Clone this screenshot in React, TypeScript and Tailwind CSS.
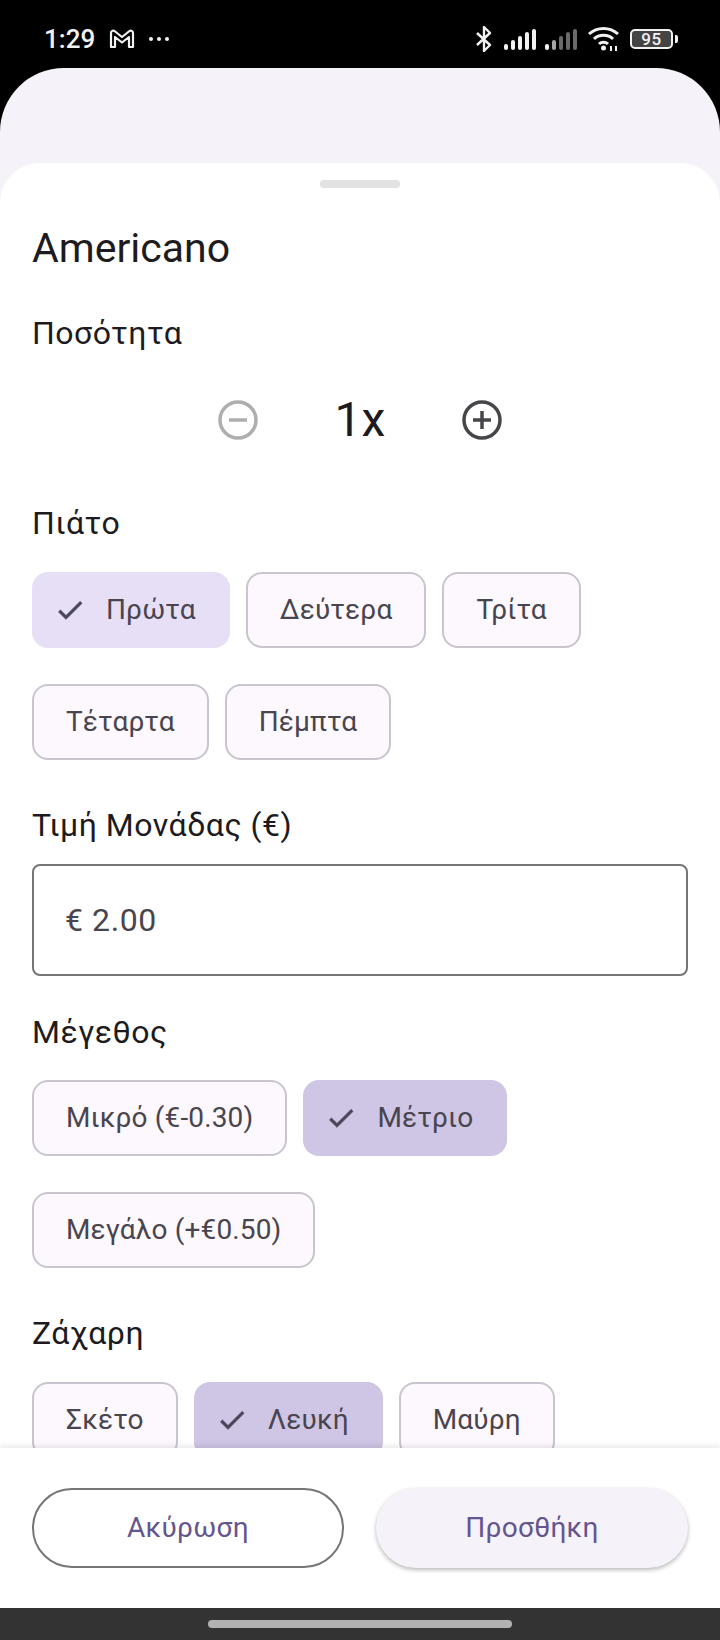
const ROW_ONE = [
  { label: "Πρώτα", selected: "light" },
  { label: "Δεύτερα" },
  { label: "Τρίτα" },
  { label: "Τέταρτα" },
  { label: "Πέμπτα" },
];

const ROW_SIZE = [
  { label: "Μικρό (€-0.30)" },
  { label: "Μέτριο", selected: "dark" },
  { label: "Μεγάλο (+€0.50)" },
];

const ROW_SUGAR = [
  { label: "Σκέτο" },
  { label: "Λευκή", selected: "dark" },
  { label: "Μαύρη" },
];

type ChipProps = {
  label: string;
  selected?: string;
};

function Chip({ label, selected }: ChipProps) {
  if (selected) {
    return (
      <div
        className={`flex h-[76px] shrink-0 items-center rounded-[16px] pl-[22px] pr-[34px] text-[28px] tracking-[0.15px] text-[#49454f] ${
          selected === "light" ? "bg-[#e6dff6]" : "bg-[#cfc5e4]"
        }`}
      >
        <svg width="32" height="32" viewBox="0 0 24 24" fill="#4a4458" stroke="#4a4458" strokeWidth="0.6" className="mr-[20px]">
          <path d="M9 16.17L4.83 12l-1.42 1.41L9 19 21 7l-1.41-1.41z" />
        </svg>
        {label}
      </div>
    );
  }

  return (
    <div className="flex h-[76px] shrink-0 items-center rounded-[16px] border-2 border-[#cac4d0] bg-[#fdf8fd] px-[32px] text-[28px] tracking-[0.15px] text-[#49454f]">
      {label}
    </div>
  );
}

function SectionLabel({ children, className }: { children: string; className: string }) {
  return <p className={`h-[40px] text-[32px] leading-[40px] tracking-[0.5px] text-[#1d1b20] ${className}`}>{children}</p>;
}

function StatusIcons() {
  const bars = [
    { x: 0, h: 6 },
    { x: 7, h: 10 },
    { x: 14, h: 14 },
    { x: 21, h: 18 },
    { x: 28, h: 21 },
  ];

  return (
    <div className="flex items-center">
      <svg width="18" height="26" viewBox="0 0 18 26" fill="none" stroke="#f2f2f2" strokeWidth="2.4" className="mr-[11px]">
        <path d="M2 7l13 12-6 6V1l6 6L2 19" strokeLinejoin="round" />
      </svg>
      <svg width="32" height="21" viewBox="0 0 32 21" className="mr-[9px]">
        {bars.map((bar) => (
          <rect key={bar.x} x={bar.x} y={21 - bar.h} width="4" height={bar.h} rx="2" fill="#f2f2f2" />
        ))}
      </svg>
      <svg width="32" height="21" viewBox="0 0 32 21" className="mr-[10px]">
        {bars.map((bar, index) => (
          <rect key={bar.x} x={bar.x} y={21 - bar.h} width="4" height={bar.h} rx="2" fill={index === 0 ? "#f2f2f2" : index === 1 ? "#a8a8a8" : "#6a6a6a"} />
        ))}
      </svg>
      <svg width="33" height="26" viewBox="0 0 33 26" fill="none" stroke="#f2f2f2" strokeWidth="3" className="mr-[10px]">
        <path d="M2 8c8-7.5 21-7.5 29 0" />
        <path d="M7 13c5-5 14-5 19 0" />
        <path d="M12 18c2.500-2.500 6.500-2.500 9 0" />
        <circle cx="16.500" cy="22" r="2.500" fill="#f2f2f2" stroke="none" />
        <path d="M24 25v-5M29 25v-5" strokeWidth="2" />
      </svg>
      <div className="flex h-[20px] w-[43px] items-center justify-center rounded-[5px] border-2 border-[#f2f2f2] bg-[#444444] text-[17px] font-medium leading-none tracking-[0.5px] text-[#f2f2f2]">
        95
      </div>
      <div className="ml-[2px] h-[8px] w-[3px] rounded-r-[2px] bg-[#f2f2f2]" />
    </div>
  );
}

export default function App() {
  return (
    <div className="flex h-[1640px] w-[720px] flex-col overflow-hidden bg-black font-['Roboto',sans-serif]">
      <div className="flex h-[68px] shrink-0 items-center justify-between pl-[44px] pr-[42px] pt-[10px]">
        <div className="flex items-center">
          <span className="text-[26px] font-medium leading-none text-[#f2f2f2]">1:29</span>
          <svg width="26" height="20" viewBox="0 0 26 20" fill="none" stroke="#f2f2f2" strokeWidth="2.200" className="ml-[14px]">
            <path d="M2 18V4c0-2 2-3 3.500-2L13 8l7.500-6c1.500-1 3.500 0 3.500 2v14h-4V8l-7 5.500L6 8v10z" strokeLinejoin="round" />
          </svg>
          <div className="ml-[14px] flex gap-[4px]">
            <span className="h-[4px] w-[4px] rounded-full bg-[#f2f2f2]" />
            <span className="h-[4px] w-[4px] rounded-full bg-[#f2f2f2]" />
            <span className="h-[4px] w-[4px] rounded-full bg-[#f2f2f2]" />
          </div>
        </div>
        <StatusIcons />
      </div>

      <div className="flex min-h-0 flex-1 flex-col rounded-t-[64px] bg-[#f6f2f9] pt-[95px]">
        <div className="flex min-h-0 flex-1 flex-col overflow-hidden rounded-t-[40px] bg-white">
          <div className="min-h-0 flex-1 overflow-hidden px-[32px] pt-[17px]">
            <div className="mx-auto h-[8px] w-[80px] rounded-full bg-[#e2e2e2]" />
            <h1 className="mt-[36px] h-[48px] text-[41px] leading-[48px] text-[#1d1b20]">Americano</h1>

            <SectionLabel className="mt-[41px]">Ποσότητα</SectionLabel>
            <div className="mt-[47px] flex h-[40px] items-center justify-center">
              <svg width="40" height="40" viewBox="0 0 40 40" fill="none" stroke="#aeaeae" strokeWidth="3.500">
                <circle cx="20" cy="20" r="18" />
                <path d="M11 20h18" />
              </svg>
              <span className="mx-[77px] text-[48px] leading-none text-[#1d1b20]">1x</span>
              <svg width="40" height="40" viewBox="0 0 40 40" fill="none" stroke="#46464a" strokeWidth="3.500">
                <circle cx="20" cy="20" r="18" />
                <path d="M11 20h18M20 11v18" />
              </svg>
            </div>

            <SectionLabel className="mt-[63px]">Πιάτο</SectionLabel>
            <div className="mt-[29px] flex flex-wrap gap-x-[16px] gap-y-[36px]">
              {ROW_ONE.map((chip) => (
                <Chip key={chip.label} label={chip.label} selected={chip.selected} />
              ))}
            </div>

            <SectionLabel className="mt-[45px]">Τιμή Μονάδας (€)</SectionLabel>
            <div className="mt-[19px] flex h-[112px] items-center rounded-[8px] border-2 border-[#757575] px-[31px] text-[32px] tracking-[0.6px] text-[#49454f]">
              € 2.00
            </div>

            <SectionLabel className="mt-[36px]">Μέγεθος</SectionLabel>
            <div className="mt-[28px] flex flex-wrap gap-x-[16px] gap-y-[36px]">
              {ROW_SIZE.map((chip) => (
                <Chip key={chip.label} label={chip.label} selected={chip.selected} />
              ))}
            </div>

            <SectionLabel className="mt-[45px]">Ζάχαρη</SectionLabel>
            <div className="mt-[29px] flex flex-wrap gap-x-[16px] gap-y-[36px]">
              {ROW_SUGAR.map((chip) => (
                <Chip key={chip.label} label={chip.label} selected={chip.selected} />
              ))}
            </div>
          </div>

          <div className="z-10 flex h-[160px] shrink-0 items-center gap-[32px] bg-white px-[32px] shadow-[0_-2px_6px_rgba(0,0,0,0.10)]">
            <button
              type="button"
              className="flex h-[80px] w-[312px] items-center justify-center rounded-full border-2 border-[#757575] text-[28px] tracking-[0.3px] text-[#65558f]"
            >
              Ακύρωση
            </button>
            <button
              type="button"
              className="flex h-[80px] flex-1 items-center justify-center rounded-full bg-[#f6f2f9] text-[28px] tracking-[0.3px] text-[#65558f] shadow-[0_2px_4px_rgba(0,0,0,0.28)]"
            >
              Προσθήκη
            </button>
          </div>
        </div>
      </div>

      <div className="flex h-[32px] shrink-0 items-center justify-center bg-[#333333]">
        <div className="h-[8px] w-[304px] rounded-full bg-[#b2b2b2]" />
      </div>
    </div>
  );
}
